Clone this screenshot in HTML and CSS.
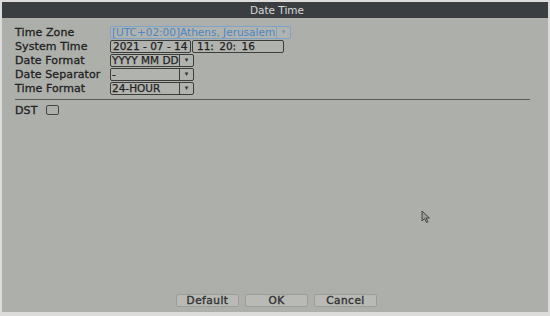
FILE: index.html
```html
<!DOCTYPE html>
<html lang="en">
<head>
    <meta charset="UTF-8">
    <title>Date Time</title>
    <link rel="stylesheet" href="styles.css">
</head>
<body>
    <div class="window">
        <div class="title">Date Time</div>

        <div class="content">
            <div class="form">
                <div class="row">
                    <span class="label">Time Zone</span>
                    <div class="select zone">
                        <span class="value">[UTC+02:00]Athens, Jerusalem</span>
                        <span class="arrow">&#9662;</span>
                    </div>
                </div>

                <div class="row">
                    <span class="label">System Time</span>
                    <div class="field date">2021 - 07 - 14</div>
                    <div class="field time">11: 20: 16</div>
                </div>

                <div class="row">
                    <span class="label">Date Format</span>
                    <div class="select">
                        <span class="value">YYYY MM DD</span>
                        <span class="arrow">&#9662;</span>
                    </div>
                </div>

                <div class="row">
                    <span class="label">Date Separator</span>
                    <div class="select">
                        <span class="value">-</span>
                        <span class="arrow">&#9662;</span>
                    </div>
                </div>

                <div class="row">
                    <span class="label">Time Format</span>
                    <div class="select">
                        <span class="value">24-HOUR</span>
                        <span class="arrow">&#9662;</span>
                    </div>
                </div>
            </div>

            <div class="line"></div>

            <div class="row dst">
                <span class="label">DST</span>
                <span class="check"></span>
            </div>

            <div class="spacer"></div>

            <div class="buttons">
                <button class="btn">Default</button>
                <button class="btn">OK</button>
                <button class="btn">Cancel</button>
            </div>
        </div>

        <!-- mouse pointer -->
        <svg class="cursor" width="12" height="14" viewBox="0 0 12 14">
            <path d="M1 1 L1 11 L3.5 8.5 L5.5 12.5 L7 11.8 L5 8 L8.5 8 Z" fill="#9a9c98" stroke="#444" stroke-width="1"/>
        </svg>
    </div>
</body>
</html>
```

FILE: styles.css
```css
body {
    margin: 0;
    padding: 2px;
    background-color: #dcdddb;
    font-family: "DejaVu Sans", sans-serif;
    font-size: 11px;
    color: #222;
}

.window {
    position: relative;
    width: 546px;
    height: 310px;
    background-color: #adafaa;
    display: flex;
    flex-direction: column;
}

.title {
    height: 16px;
    line-height: 16px;
    background-color: #3b3e41;
    color: #d6d8d6;
    text-align: center;
    font-size: 10.5px;
    padding-left: 4px;
}

.content {
    flex-grow: 1;
    display: flex;
    flex-direction: column;
    padding: 8px 18px 4px 13px;
}

.form {
    display: flex;
    flex-direction: column;
    gap: 2px;
}

.row {
    display: flex;
    align-items: center;
    height: 12px;
}

.label {
    width: 95px;
    flex-shrink: 0;
    letter-spacing: 0.1px;
    -webkit-text-stroke: 0.3px #222;
}

.select {
    display: flex;
    width: 82px;
    height: 11px;
    border: 1px solid #3d3e3c;
    border-radius: 2px;
    background-color: #b1b3ae;
}

.select .value {
    flex-grow: 1;
    padding-left: 1px;
    line-height: 11px;
    font-size: 10.5px;
    overflow: hidden;
    white-space: nowrap;
    -webkit-text-stroke: 0.25px #222;
}

.select .arrow {
    width: 13px;
    border-left: 1px solid #3d3e3c;
    text-align: center;
    font-size: 7px;
    line-height: 11px;
    color: #333;
}

.zone {
    width: 179px;
    border-color: #7fa3c8;
}

.zone .value {
    color: #4a86c8;
    -webkit-text-stroke: 0;
}

.zone .arrow {
    border-left-color: #7fa3c8;
    color: #6e94bd;
}

.field {
    height: 11px;
    line-height: 11px;
    border: 1px solid #3d3e3c;
    border-radius: 2px;
    font-size: 10.5px;
    padding-left: 2px;
    background-color: #b1b3ae;
    -webkit-text-stroke: 0.25px #222;
}

.date {
    width: 77px;
}

.time {
    width: 86px;
    margin-left: 1px;
    padding-left: 4px;
    word-spacing: 2px;
}

.line {
    border-top: 1px solid #5a5c59;
    margin: 5px 0 4px 0;
}

.dst .label {
    width: 31px;
}

.check {
    width: 11px;
    height: 8px;
    border: 1px solid #454644;
    border-radius: 2px;
}

.spacer {
    flex-grow: 1;
}

.buttons {
    display: flex;
    justify-content: center;
    gap: 6px;
    margin-left: 8px;
    margin-bottom: 1px;
}

.btn {
    width: 63px;
    height: 13px;
    padding: 0;
    font-family: "DejaVu Sans", sans-serif;
    font-size: 10.5px;
    color: #333;
    -webkit-text-stroke: 0.4px #333;
    background-color: #b9bab6;
    border: 1px solid #9c9d9a;
    border-radius: 2px;
    letter-spacing: 0.5px;
    line-height: 11px;
}

.cursor {
    position: absolute;
    left: 419px;
    top: 208px;
}
```
